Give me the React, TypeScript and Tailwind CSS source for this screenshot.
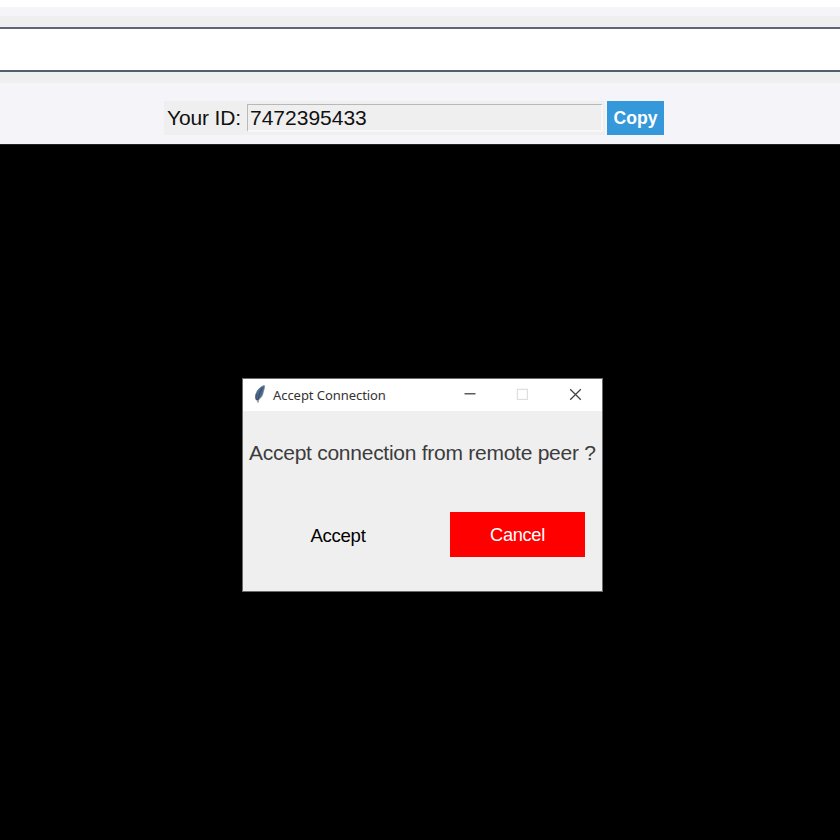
import React from "react";

function Feather() {
  return (
    <svg width="14" height="20" viewBox="0 0 14 20" className="ml-[10px] mt-[6px] shrink-0">
      <path d="M11.4 0.6C8 1.2 4.2 4.8 3 8.8C2.4 11.3 2.4 13.2 3.2 15L5.8 14.6C8.3 12.7 9.7 10.3 10.2 7.6C10.7 5.3 11.8 2.8 11.4 0.6Z" fill="#48698f" stroke="#77808a" strokeWidth="0.7" />
      <path d="M3.4 8.8C2.7 11.3 2.8 13 3.5 14.8L5 14.5M9.4 3C6.8 7 5.4 10.2 4.9 17.6" fill="none" stroke="#34465a" strokeWidth="0.9" />
    </svg>
  );
}

function Dialog() {
  return (
    <section className="flex h-[214px] w-[361px] flex-col border border-[#6b6b6b] bg-[#efefef]">
      <header className="flex h-[32px] shrink-0 bg-white">
        <Feather />
        <h1 className="ml-[6px] mt-[6px] w-[160px] whitespace-nowrap font-['Noto_Sans',sans-serif] text-[13px] leading-5 tracking-[-0.06px] text-[#333]">
          Accept Connection
        </h1>
        <svg width="150" height="32" viewBox="433 379 150 32" className="shrink-0" fill="none">
          <path d="M464.5 393.8H475.5" stroke="#333" strokeWidth="1.2" />
          <rect x="517.4" y="389.4" width="10" height="10" stroke="#dedede" strokeWidth="1.2" />
          <path d="M570.2 389.2L580.8 399.8M580.8 389.2L570.2 399.8" stroke="#444" strokeWidth="1.3" />
        </svg>
      </header>
      <p className="ml-[6px] mt-[30px] whitespace-nowrap text-[21px] leading-6 tracking-[-0.26px] text-[#3c3c3c]">
        Accept connection from remote peer ?
      </p>
      <div className="mt-[47px] flex">
        <button className="ml-[28px] h-[45px] w-[134px] pt-[2px] text-[18.6px] leading-5 tracking-[-0.3px] text-black">Accept</button>
        <button className="ml-[45px] h-[45px] w-[135px] bg-[#ff0000] text-[18.2px] leading-5 tracking-[-0.3px] text-white">Cancel</button>
      </div>
    </section>
  );
}

export default function App() {
  return (
    <main className="flex h-[840px] w-[840px] flex-col overflow-hidden bg-white font-['Liberation_Sans',Arial,sans-serif]">
      <div className="h-[7px] shrink-0 bg-white" />
      <div className="h-[9px] shrink-0 bg-[#f4f4f9]" />
      <div className="flex h-[67px] shrink-0 flex-col bg-[#efefef] pt-[11px]">
        <div className="h-[45px] border-y-2 border-t-[#5c6674] border-b-[#52606e] bg-white" />
      </div>
      <div className="flex h-[61px] shrink-0 items-start bg-[#f4f4f9] pl-[164px] pt-[18px]">
        <div className="flex h-[34px] w-[441px] items-start bg-[#efefef]">
          <label className="w-[83px] whitespace-nowrap pl-[3px] pt-[5px] text-[21px] leading-6 tracking-[-0.15px] text-[#111]">Your ID:</label>
          <div className="mt-[3px] h-[28px] w-[356px] border border-b-2 border-r-2 border-[#f7f7f7] border-l-[#b8b8b8] border-t-[#b8b8b8] bg-[#efefef] pl-[2px] pt-[1px] text-[21px] leading-6 text-[#111]">
            7472395433
          </div>
        </div>
        <button className="ml-[2px] h-[34px] w-[57px] bg-[#3498db] text-[17.6px] font-bold leading-5 text-white">Copy</button>
      </div>
      <div className="flex grow flex-col items-start border-t border-[#222] bg-black pl-[242px] pt-[233px]">
        <Dialog />
      </div>
    </main>
  );
}
